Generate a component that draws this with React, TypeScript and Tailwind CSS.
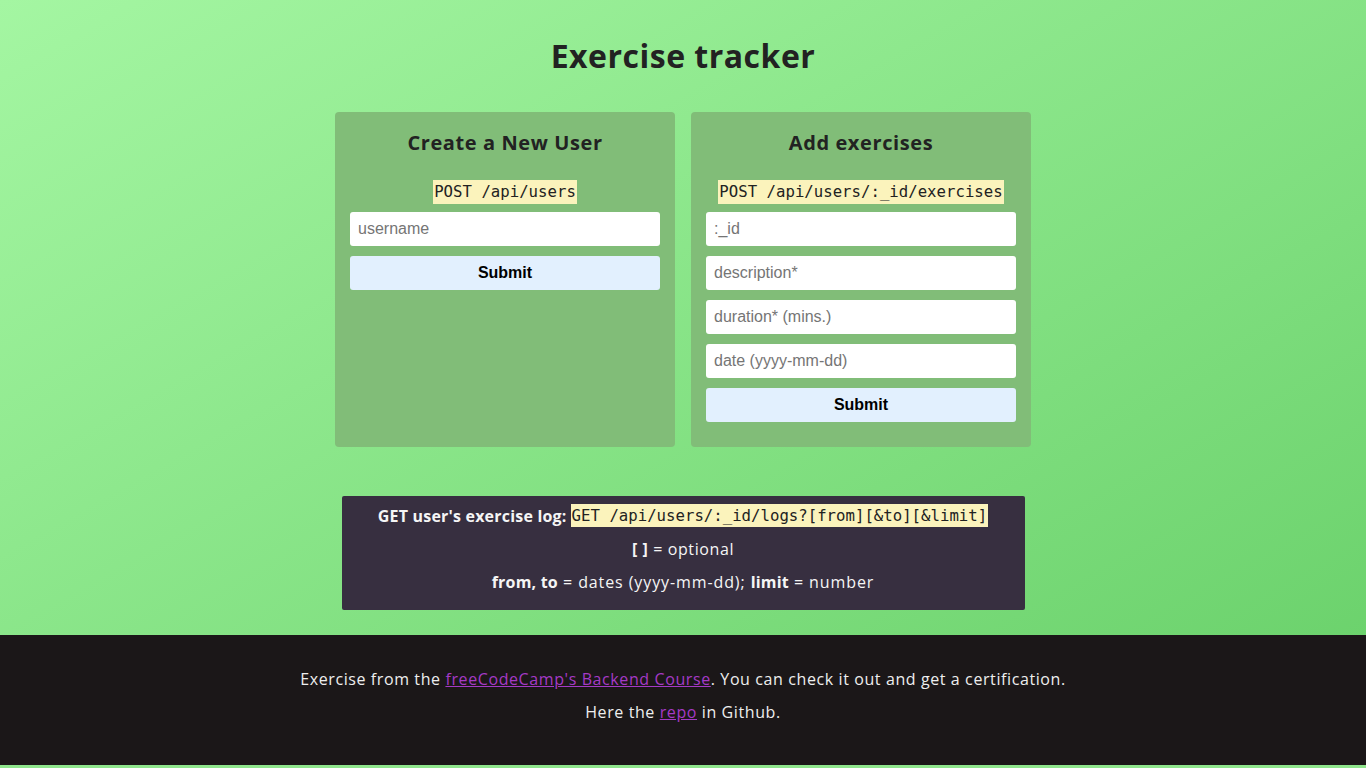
import React from "react";

const inputCls =
  "w-full h-[34px] bg-white rounded-[3px] px-2 text-[16px] text-[#222] placeholder:text-[#757575] outline-none font-['Liberation_Sans',Arial,sans-serif] tracking-normal";
const btnCls =
  "w-full h-[34px] bg-[#e2f0fe] rounded-[3px] text-[16px] font-bold text-black font-['Liberation_Sans',Arial,sans-serif] tracking-normal";
const codeCls =
  "bg-[#fbf3bc] text-[#222] px-[1px] font-['DejaVu_Sans_Mono',monospace] text-[15.7px] tracking-normal font-normal";

export default function App() {
  return (
    <div className="min-h-[768px] flex flex-col font-['Open_Sans',sans-serif] bg-[linear-gradient(to_bottom_right,#a4f6a2,#67cf68)]">
      <main className="flex flex-col items-center">
        <h1 className="mt-[34px] text-[32px] leading-[44px] font-bold text-[#222] tracking-[0.5px]">
          Exercise tracker
        </h1>
        <div className="mt-[34px] flex gap-4">
          <div className="w-[340px] h-[335px] bg-[#81bd78] rounded-[4px] px-[15px] pt-[17px] flex flex-col items-center">
            <h2 className="text-[20px] leading-[28px] font-bold text-[#222] tracking-[0.6px]">Create a New User</h2>
            <div className="mt-[23px] h-[24px] flex items-center">
              <code className={codeCls}>POST /api/users</code>
            </div>
            <div className="mt-[8px] w-full flex flex-col gap-[10px]">
              <input className={inputCls} placeholder="username" />
              <button className={btnCls}>Submit</button>
            </div>
          </div>
          <div className="w-[340px] h-[335px] bg-[#81bd78] rounded-[4px] px-[15px] pt-[17px] flex flex-col items-center">
            <h2 className="text-[20px] leading-[28px] font-bold text-[#222] tracking-[0.6px]">Add exercises</h2>
            <div className="mt-[23px] h-[24px] flex items-center">
              <code className={codeCls}>POST /api/users/:_id/exercises</code>
            </div>
            <div className="mt-[8px] w-full flex flex-col gap-[10px]">
              <input className={inputCls} placeholder=":_id" />
              <input className={inputCls} placeholder="description*" />
              <input className={inputCls} placeholder="duration* (mins.)" />
              <input className={inputCls} placeholder="date (yyyy-mm-dd)" />
              <button className={btnCls}>Submit</button>
            </div>
          </div>
        </div>
        <div className="mt-[49px] mb-[25px] w-[683px] h-[114px] bg-[#372f40] rounded-[2px] text-[#f5f5f5] text-[16px] tracking-[0.6px] flex flex-col items-center pt-[3px]">
          <p className="h-[33px] flex items-center">
            <span className="font-bold mr-[4px] tracking-[0.2px]">GET user's exercise log:</span>
            <code className={codeCls}>GET /api/users/:_id/logs?[from][&amp;to][&amp;limit]</code>
          </p>
          <p className="h-[33px] flex items-center whitespace-pre">
            <span className="font-bold">[ ]</span> = optional
          </p>
          <p className="h-[33px] flex items-center whitespace-pre tracking-[0.9px]">
            <span className="font-bold tracking-[0.2px]">from, to</span> = dates (yyyy-mm-dd); <span className="font-bold tracking-[0.2px]">limit</span> = number
          </p>
        </div>
      </main>
      <footer className="bg-[#1b1718] h-[130px] flex flex-col items-center pt-[32px] text-[16px] text-[#eee] gap-[9px] tracking-[0.6px]">
        <p className="leading-[24px]">
          Exercise from the{" "}
          <a href="#" className="text-[#a53ac6] underline">
            freeCodeCamp's Backend Course
          </a>
          . You can check it out and get a certification.
        </p>
        <p className="leading-[24px]">
          Here the{" "}
          <a href="#" className="text-[#a53ac6] underline">
            repo
          </a>{" "}
          in Github.
        </p>
      </footer>
      <div className="h-[3px] bg-[#8fe58c]" />
    </div>
  );
}
